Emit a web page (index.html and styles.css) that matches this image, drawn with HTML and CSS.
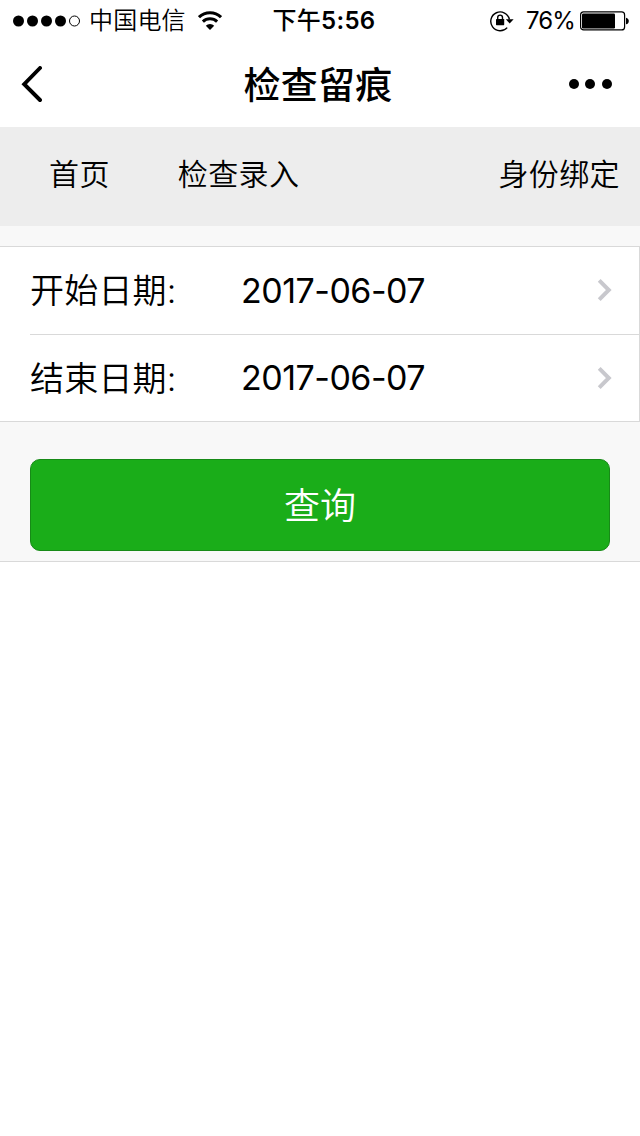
FILE: index.html
```html
<!DOCTYPE html>
<html lang="zh-CN">
<head>
    <meta charset="UTF-8">
    <meta name="viewport" content="width=device-width, initial-scale=1.0">
    <title>检查留痕</title>
    <link rel="stylesheet" href="styles.css">
</head>
<body>
    <div class="status-bar">
        <div class="status-left">
            <svg class="signal" width="68" height="12" viewBox="0 0 68 12">
                <circle cx="5.5" cy="6" r="5.5"/>
                <circle cx="19.5" cy="6" r="5.5"/>
                <circle cx="33.5" cy="6" r="5.5"/>
                <circle cx="47.5" cy="6" r="5.5"/>
                <circle cx="61.5" cy="6" r="5" fill="none" stroke="#000" stroke-width="1"/>
            </svg>
            <span class="carrier">中国电信</span>
            <svg class="wifi" width="24" height="20" viewBox="0 0 24 20" fill="none" stroke="#000" stroke-width="3">
                <path d="M1 6.2a15.6 15.6 0 0 1 22 0"/>
                <path d="M4.9 10.6a10.2 10.2 0 0 1 14.2 0"/>
                <path d="M12 19l-4.2-4.3a5.9 5.9 0 0 1 8.4 0z" fill="#000" stroke="none"/>
            </svg>
        </div>
        <div class="status-time">下午<b>5:56</b></div>
        <div class="status-right">
            <svg class="lock" width="24" height="22" viewBox="0 0 24 22">
                <path d="M17.2 17.6A9.4 9.4 0 1 1 19.4 9.5" fill="none" stroke="#000" stroke-width="1.4"/>
                <path d="M15.8 9.2h7.8l-3.9 4.2z"/>
                <rect x="6" y="9" width="8.2" height="6.2" rx=".6"/>
                <path d="M7.7 9.4V7.5a2.4 2.4 0 0 1 4.8 0v1.9" fill="none" stroke="#000" stroke-width="1.4"/>
            </svg>
            <span class="percent">76%</span>
            <svg class="battery" width="50" height="20" viewBox="0 0 50 20">
                <rect x=".6" y=".9" width="44" height="18" rx="3" fill="none" stroke="#000" stroke-width="1.2"/>
                <rect x="2" y="2.5" width="33" height="15" rx="1.2"/>
                <path d="M46 6.7c1.8.3 2.8 1.7 2.8 3.3s-1 3-2.8 3.3z"/>
            </svg>
        </div>
    </div>

    <div class="nav-bar">
        <svg class="back" width="22" height="36" viewBox="0 0 22 36">
            <path d="M19 2L3.2 18.2 19 34" fill="none" stroke="#000" stroke-width="3.9" stroke-linecap="round"/>
        </svg>
        <h1 class="title">检查留痕</h1>
        <svg class="more" width="44" height="10" viewBox="0 0 44 10">
            <circle cx="5" cy="5" r="5"/>
            <circle cx="21" cy="5" r="5"/>
            <circle cx="38" cy="5" r="5"/>
        </svg>
    </div>

    <div class="menu">
        <a class="menu-item">首页</a>
        <a class="menu-item">检查录入</a>
        <a class="menu-item menu-bind">身份绑定</a>
    </div>

    <div class="search">
        <div class="cells">
            <div class="cell">
                <span class="label">开始日期:</span>
                <span class="value">2017-06-07</span>
                <svg class="arrow" width="16" height="24" viewBox="0 0 16 24">
                    <path d="M2.2 2.4l9.6 9.6-9.6 9.6" fill="none" stroke="#c8c8cd" stroke-width="4"/>
                </svg>
            </div>
            <div class="cell">
                <span class="label">结束日期:</span>
                <span class="value">2017-06-07</span>
                <svg class="arrow" width="16" height="24" viewBox="0 0 16 24">
                    <path d="M2.2 2.4l9.6 9.6-9.6 9.6" fill="none" stroke="#c8c8cd" stroke-width="4"/>
                </svg>
            </div>
        </div>
        <button class="btn">查询</button>
    </div>
</body>
</html>
```
FILE: styles.css
```css
* {
    box-sizing: border-box;
}

body {
    margin: 0;
    background-color: #fff;
    color: #000;
    font-family: Inter, "Noto Sans CJK SC", sans-serif;
}

svg {
    display: block;
    flex: none;
}

.status-bar {
    display: grid;
    grid-template-columns: 1fr auto 1fr;
    align-items: center;
    height: 40px;
    padding: 0 10px 0 13px;
    font-size: 24px;
    line-height: 40px;
}

.status-left,
.status-right {
    display: flex;
    align-items: center;
}

.status-right {
    justify-content: flex-end;
}

.carrier {
    margin: 0 12px 0 8px;
    padding-top: 1px;
    font-weight: 350;
    letter-spacing: 0.2px;
}

.status-time {
    padding: 1px 0 0 5px;
    font-weight: 500;
    letter-spacing: 0.3px;
}

.status-time b {
    font-weight: 600;
}

.percent {
    margin: 0 5px 0 12px;
    padding-top: 1px;
    letter-spacing: -0.9px;
}

.nav-bar {
    display: grid;
    grid-template-columns: 1fr auto 1fr;
    align-items: center;
    height: 87px;
    padding: 0 27px 0 21px;
}

.title {
    margin: 0;
    padding: 4px 0 0 2px;
    font-size: 37px;
    font-weight: 500;
    line-height: 83px;
    letter-spacing: 0.3px;
}

.more {
    justify-self: end;
}

.menu {
    display: flex;
    height: 99px;
    padding: 0 20px 0 49px;
    background-color: #ededed;
    font-size: 30px;
    font-weight: 350;
    line-height: 95px;
    letter-spacing: 0.4px;
}

.menu-item + .menu-item {
    margin-left: 68px;
}

.menu .menu-bind {
    margin-left: auto;
}

.search {
    padding: 20px 0 10px;
    background-color: #f8f8f8;
    border-bottom: 1px solid #d9d9d9;
}

.cells {
    background-color: #fff;
    border: 1px solid #d9d9d9;
    border-left: none;
}

.cell {
    display: flex;
    align-items: center;
    height: 87px;
    margin-left: 30px;
    padding-right: 26px;
    font-size: 34px;
}

.cell + .cell {
    border-top: 1px solid #d9d9d9;
}

.label {
    width: 211px;
    padding-bottom: 4px;
    font-weight: 350;
    letter-spacing: 0.2px;
}

.value {
    flex: 1;
    padding-bottom: 1px;
    letter-spacing: -0.5px;
}

.arrow {
    margin-bottom: 1px;
}

.btn {
    display: block;
    width: 580px;
    height: 92px;
    margin: 37px auto 0;
    padding: 0 0 4px;
    border: 1px solid #178a17;
    border-radius: 10px;
    background-color: #1aad19;
    color: #fff;
    font-family: inherit;
    font-size: 36px;
    font-weight: 350;
}
```
